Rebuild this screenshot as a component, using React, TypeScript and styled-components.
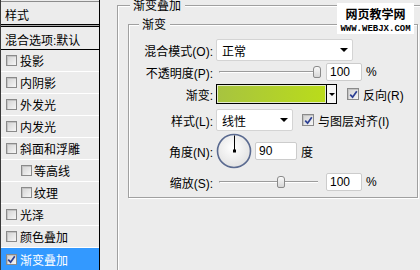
import React from "react";
import styled, { createGlobalStyle } from "styled-components";

const GlobalStyle = createGlobalStyle`
  *, *::before, *::after { box-sizing: border-box; }
  html, body { margin: 0; padding: 0; background: #ececec; overflow: hidden; }
  body {
    font-family: "Liberation Sans", "Noto Sans CJK SC", sans-serif;
    font-size: 12px;
    color: #000;
  }
`;

const Dialog = styled.div`
  position: relative;
  display: flex;
  width: 420px;
  height: 270px;
  overflow: hidden;
`;

/* ---------- left: style list ---------- */

const StyleList = styled.div`
  flex: none;
  width: 100px;
  display: flex;
  flex-direction: column;
  border-left: 1px solid #3a3a3a;
  border-right: 1px solid #000;
`;

const ListTitle = styled.div`
  margin-top: 1px;
  height: 24px;
  padding: 2px 0 0 4px;
  display: flex;
  align-items: center;
  border-top: 1px solid #8c8c8c;
  border-bottom: 1px solid #000;
`;

const TitleGap = styled.div`
  height: 1px;
  background: #a8a8a8;
`;

const BlendRow = styled.div`
  height: 24px;
  padding: 2px 0 0 4px;
  display: flex;
  align-items: center;
  border-top: 1px solid #000;
  border-bottom: 1px solid #000;
  white-space: nowrap;
`;

const ListItem = styled.div<{ $indent?: boolean; $selected?: boolean }>`
  height: 22px;
  flex: ${(p) => (p.$selected ? "1" : "none")};
  display: flex;
  align-items: center;
  gap: ${(p) => (p.$indent ? "2px" : "3px")};
  padding-left: ${(p) => (p.$indent ? "20px" : "5px")};
  border-bottom: ${(p) => (p.$selected ? "none" : "1px solid #fff")};
  background: ${(p) => (p.$selected ? "#3399ff" : "transparent")};
  color: ${(p) => (p.$selected ? "#fff" : "#000")};
  white-space: nowrap;
`;

const Box = styled.span<{ $size: number }>`
  flex: none;
  position: relative;
  width: ${(p) => p.$size}px;
  height: ${(p) => p.$size}px;
  border: 1px solid #8a8a8a;
  background: linear-gradient(135deg, #d2d2d2, #f6f6f6);
  box-shadow: inset 1px 1px 0 #c4c4c4;
  display: flex;
  align-items: center;
  justify-content: center;
`;

const Tick = () => (
  <svg width="9" height="9" viewBox="0 0 9 9">
    <path d="M1.2 4.6 L3.6 7.2 L7.8 1.2" fill="none" stroke="#2c3f93" strokeWidth="1.7" />
  </svg>
);

const CheckBox: React.FC<{ size: number; checked?: boolean }> = ({ size, checked }) => (
  <Box $size={size}>{checked && <Tick />}</Box>
);

/* ---------- right: settings ---------- */

const Settings = styled.div`
  flex: 1;
  padding-left: 17px;
`;

const Group = styled.fieldset<{ $outer?: boolean }>`
  margin: 0;
  min-width: 0;
  border: 1px solid #a0a0a0;
  box-shadow: inset 1px 1px 0 #fff, 1px 1px 0 #fff;
  width: ${(p) => (p.$outer ? "340px" : "290px")};
  min-height: ${(p) => (p.$outer ? "320px" : "0")};
  padding: ${(p) => (p.$outer ? "9px 0 0 10px" : "10px 0 6px 0")};
`;

const Legend = styled.legend<{ $offset: number }>`
  margin-left: ${(p) => p.$offset}px;
  padding: 0 4px 0 3px;
  height: 10px;
  line-height: 13px;
  background: #ececec;
  white-space: nowrap;
`;

const Row = styled.div<{ $h: number; $mt?: number }>`
  display: flex;
  align-items: center;
  height: ${(p) => p.$h}px;
  margin-top: ${(p) => p.$mt ?? 0}px;
  white-space: nowrap;
`;

const Label = styled.span`
  flex: none;
  width: 84px;
  margin-right: 3px;
  text-align: right;
`;

const Select = styled.div<{ $w: number }>`
  flex: none;
  width: ${(p) => p.$w}px;
  height: 22px;
  display: flex;
  align-items: center;
  justify-content: space-between;
  padding: 0 4px 0 5px;
  background: #fff;
  border: 1px solid #d4d4d4;
  border-radius: 2px;
`;

const DownArrow = styled.span<{ $size: number }>`
  width: 0;
  height: 0;
  border-left: ${(p) => p.$size}px solid transparent;
  border-right: ${(p) => p.$size}px solid transparent;
  border-top: ${(p) => p.$size}px solid #000;
`;

const SliderTrack = styled.div`
  flex: none;
  position: relative;
  width: 102px;
  height: 18px;
  margin-left: 3px;
  &::before {
    content: "";
    position: absolute;
    left: 0;
    right: 3px;
    top: 8px;
    height: 2px;
    border-top: 1px solid #9c9c9c;
    border-bottom: 1px solid #fff;
    border-left: 1px solid #9c9c9c;
  }
`;

const Thumb = styled.span`
  position: absolute;
  top: 3px;
  width: 8px;
  height: 12px;
  border: 1px solid #8a8a8a;
  border-radius: 3px 3px 2px 2px;
  background: linear-gradient(#fafafa, #d6d6d6);
`;

const Slider: React.FC<{ ratio: number }> = ({ ratio }) => (
  <SliderTrack>
    <Thumb style={{ left: Math.round(ratio * 94) }} />
  </SliderTrack>
);

const Field = styled.div<{ $w: number; $ml: number }>`
  flex: none;
  width: ${(p) => p.$w}px;
  height: 18px;
  margin-left: ${(p) => p.$ml}px;
  padding-left: 3px;
  line-height: 16px;
  background: #fff;
  border: 1px solid #cccccc;
  border-radius: 2px;
`;

const Unit = styled.span`
  margin-left: 4px;
`;

const GradientPicker = styled.div`
  flex: none;
  display: flex;
  width: 121px;
  height: 20px;
  border: 1px solid #000;
`;

const GradientFill = styled.div`
  flex: 1;
  background: linear-gradient(to right, #a7c340, #badc1a);
  box-shadow: inset 0 0 0 1px #e4ebcf;
`;

const GradientMenu = styled.div`
  flex: none;
  width: 10px;
  border-left: 1px solid #000;
  background: #f6f6f6;
  display: flex;
  align-items: center;
  justify-content: center;
`;

const Option = styled.label<{ $ml: number }>`
  display: flex;
  align-items: center;
  gap: 4px;
  margin-left: ${(p) => p.$ml}px;
`;

const Dial = () => (
  <svg width="36" height="36" viewBox="0 0 36 36" style={{ flex: "none" }}>
    <defs>
      <radialGradient id="dialFill" cx="0.45" cy="0.4" r="0.6">
        <stop offset="0" stopColor="#ffffff" />
        <stop offset="1" stopColor="#e2e2e2" />
      </radialGradient>
    </defs>
    <circle cx="18" cy="18" r="16.5" fill="url(#dialFill)" stroke="#5a6a90" strokeWidth="1.6" />
    <line x1="18.5" y1="18" x2="18.5" y2="2.5" stroke="#000" strokeWidth="1" />
    <rect x="17" y="16.5" width="3" height="3" fill="#000" />
  </svg>
);

const Watermark = styled.div`
  position: absolute;
  top: 3px;
  left: 337px;
  width: 77px;
  height: 31px;
  background: #fff;
  display: flex;
  flex-direction: column;
  align-items: center;
  padding-top: 4px;
`;

const WatermarkTitle = styled.span`
  font-family: "Noto Sans CJK SC", sans-serif;
  font-weight: 700;
  font-size: 12px;
  line-height: 14px;
`;

const WatermarkUrl = styled.span`
  margin-top: 4px;
  font-family: "Liberation Mono", monospace;
  font-weight: 700;
  font-size: 9px;
  line-height: 8px;
`;

const layers: { name: string; indent?: boolean }[] = [
  { name: "投影" },
  { name: "内阴影" },
  { name: "外发光" },
  { name: "内发光" },
  { name: "斜面和浮雕" },
  { name: "等高线", indent: true },
  { name: "纹理", indent: true },
  { name: "光泽" },
  { name: "颜色叠加" },
];

export default function App() {
  return (
    <Dialog>
      <GlobalStyle />
      <StyleList>
        <ListTitle>样式</ListTitle>
        <TitleGap />
        <BlendRow>混合选项:默认</BlendRow>
        {layers.map((l) => (
          <ListItem key={l.name} $indent={l.indent}>
            <CheckBox size={11} />
            {l.name}
          </ListItem>
        ))}
        <ListItem $selected>
          <CheckBox size={11} checked />
          渐变叠加
        </ListItem>
      </StyleList>

      <Settings>
        <Group $outer>
          <Legend $offset={2}>渐变叠加</Legend>
          <Group>
            <Legend $offset={10}>渐变</Legend>
            <Row $h={22}>
              <Label>混合模式(O):</Label>
              <Select $w={137}>
                正常
                <DownArrow $size={4} />
              </Select>
            </Row>
            <Row $h={18} $mt={2}>
              <Label>不透明度(P):</Label>
              <Slider ratio={1} />
              <Field $w={36} $ml={5}>100</Field>
              <Unit>%</Unit>
            </Row>
            <Row $h={20} $mt={3}>
              <Label>渐变:</Label>
              <GradientPicker>
                <GradientFill />
                <GradientMenu>
                  <DownArrow $size={3} />
                </GradientMenu>
              </GradientPicker>
              <Option $ml={10}>
                <CheckBox size={12} checked />
                反向(R)
              </Option>
            </Row>
            <Row $h={22} $mt={5}>
              <Label>样式(L):</Label>
              <Select $w={77}>
                线性
                <DownArrow $size={4} />
              </Select>
              <Option $ml={9}>
                <CheckBox size={12} checked />
                与图层对齐(I)
              </Option>
            </Row>
            <Row $h={36} $mt={2}>
              <Label>角度(N):</Label>
              <Dial />
              <Field $w={42} $ml={3}>90</Field>
              <Unit>度</Unit>
            </Row>
            <Row $h={18} $mt={4}>
              <Label>缩放(S):</Label>
              <Slider ratio={0.617} />
              <Field $w={36} $ml={5}>100</Field>
              <Unit>%</Unit>
            </Row>
          </Group>
        </Group>
      </Settings>

      <Watermark>
        <WatermarkTitle>网页教学网</WatermarkTitle>
        <WatermarkUrl>WWW.WEBJX.COM</WatermarkUrl>
      </Watermark>
    </Dialog>
  );
}
